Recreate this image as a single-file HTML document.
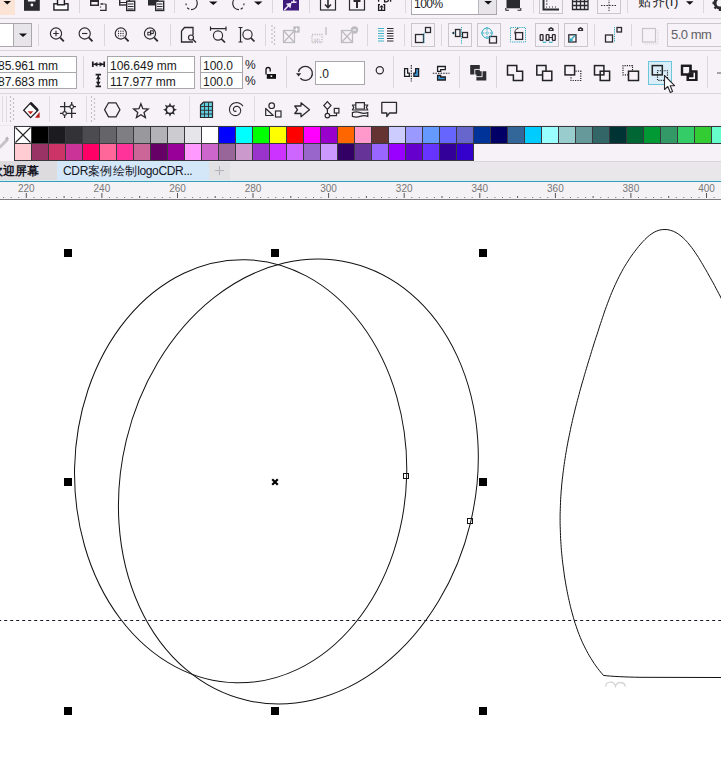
<!DOCTYPE html>
<html><head><meta charset="utf-8">
<style>
html,body{margin:0;padding:0;}
body{width:721px;height:759px;overflow:hidden;position:relative;background:#f6f2f8;font-family:"Liberation Sans",sans-serif;}
.a{position:absolute;}
.hl{position:absolute;height:1px;background:#d9d7db;}
.vs{position:absolute;width:1px;background:#d9d7db;}
.box{position:absolute;border:1px solid #a9a7ab;background:#fff;box-sizing:border-box;}
.btn{position:absolute;border:1px solid #c9c7cb;box-sizing:border-box;}
.t{position:absolute;font-size:12px;color:#1a1a1a;white-space:nowrap;line-height:14px;}
svg{position:absolute;overflow:visible;}
</style></head>
<body>
<!-- ===== ROW 1 ===== -->
<div class="a" style="left:0;top:0;width:15px;height:15px;background:#fbe3d6"></div>
<div class="a" style="left:411px;top:-2px;width:86px;height:17px;background:#fff;border:1px solid #a9a7ab;box-sizing:border-box"></div>
<div class="a" style="left:478px;top:-1px;width:17px;height:15px;background:#e7e5e9;border-left:1px solid #b9b7bb"></div>
<div class="a" style="left:539px;top:-2px;width:24px;height:16px;border:1px solid #c9c7cb;box-sizing:border-box"></div>
<div class="a" style="left:597px;top:-2px;width:24px;height:16px;border:1px solid #c9c7cb;box-sizing:border-box"></div>
<div class="t" style="left:414px;top:-3px;font-size:12px;line-height:14px;letter-spacing:-0.5px">100%</div>
<div class="t" style="left:638px;top:-6px;font-size:13px;line-height:16px;letter-spacing:0.5px">贴齐(I)</div>
<svg style="left:0;top:0" width="721" height="18">
 <g fill="#111">
  <path d="M3.5 1 L11 1 L7.25 4.5Z"/>
  <path d="M209 1.5 L217.5 1.5 L213.25 5Z"/>
  <path d="M254 1.5 L262.5 1.5 L258.25 5Z"/>
  <path d="M484.3 1 L492 1 L488.15 4.6Z"/>
  <path d="M686 1.2 L693.5 1.2 L689.75 4.8Z"/>
 </g>
 <g stroke="#d9d7db" stroke-width="1">
  <line x1="79.5" y1="0" x2="79.5" y2="13"/><line x1="174.5" y1="0" x2="174.5" y2="13"/>
  <line x1="272.5" y1="0" x2="272.5" y2="13"/><line x1="309.5" y1="0" x2="309.5" y2="13"/>
  <line x1="405.5" y1="0" x2="405.5" y2="13"/><line x1="533.5" y1="0" x2="533.5" y2="13"/>
  <line x1="627.5" y1="0" x2="627.5" y2="13"/><line x1="703.5" y1="0" x2="703.5" y2="13"/>
 </g>
 <!-- save -->
 <rect x="24" y="-2" width="15.8" height="12.8" fill="#2b2a2e"/>
 <rect x="27.9" y="-2" width="7.6" height="3.5" fill="#f6f2f8"/>
 <circle cx="31.9" cy="5" r="1.4" fill="#fff"/>
 <!-- print tray -->
 <rect x="53.9" y="3.8" width="14.1" height="6.2" fill="#fff" stroke="#1e1d21" stroke-width="1.4"/>
 <rect x="57.5" y="-2" width="6.9" height="6.8" fill="#f6f2f8" stroke="#1e1d21" stroke-width="1.4"/>
 <!-- import copy icons -->
 <path d="M90.7 -1 V5.3 H98.3 V-1" fill="none" stroke="#2b2a2e" stroke-width="1.4"/>
 <rect x="90" y="-1" width="9" height="3" fill="#2b2a2e"/>
 <path d="M100.5 4 H103 M100.5 6.5 V7.5 M106 4 V10.3 H100" fill="none" stroke="#2b2a2e" stroke-width="1.3"/>
 <path d="M103.5 4 H106" stroke="#2b2a2e" stroke-width="1.3" stroke-dasharray="1 1"/>
 <rect x="119.7" y="-1" width="9.6" height="6" fill="none" stroke="#2b2a2e" stroke-width="1.4"/>
 <path d="M120 2.5 H129" stroke="#2b2a2e" stroke-width="1"/>
 <rect x="126.7" y="1.2" width="8" height="9.3" fill="#f6f2f8" stroke="#2b2a2e" stroke-width="1.4"/>
 <path d="M128 4 H133.5 M128 6.5 H133.5 M128 9 H133.5" stroke="#2b2a2e" stroke-width="1.2"/>
 <rect x="148" y="-1" width="10.5" height="6.5" fill="#2b2a2e"/>
 <rect x="155.7" y="1.2" width="8" height="9.3" fill="#f6f2f8" stroke="#2b2a2e" stroke-width="1.4"/>
 <path d="M157 4 H162.5 M157 6.5 H162.5 M157 9 H162.5" stroke="#2b2a2e" stroke-width="1.2"/>
 <!-- undo redo -->
 <path d="M192.5 -2.8 A6.3 6.3 0 0 1 191 9.6" fill="none" stroke="#2b2a2e" stroke-width="1.2"/>
 <path d="M189.3 9.2 L187.2 7.8 M186.2 5.2 L186 3.5" fill="none" stroke="#2b2a2e" stroke-width="1.2"/>
 <path d="M237.5 -2.8 A6.3 6.3 0 0 0 239 9.6" fill="none" stroke="#2b2a2e" stroke-width="1.2"/>
 <path d="M240.7 9.2 L242.8 7.8 M243.8 5.2 L244 3.5" fill="none" stroke="#2b2a2e" stroke-width="1.2"/>
 <!-- purple -->
 <rect x="283" y="-2" width="16" height="12.5" fill="#3e1a7a"/>
 <path d="M284.3 10 L289.5 4.8" fill="none" stroke="#f0e8fa" stroke-width="1.6"/>
 <path d="M291.5 2.8 L285.8 3.8 L290.5 8.5Z" fill="#f0e8fa"/>
 <path d="M293.8 -1 V2.5 M291 2.3 H296.5" fill="none" stroke="#f0e8fa" stroke-width="1.5"/>
 <!-- import/export -->
 <rect x="320.5" y="-2" width="15" height="12" fill="none" stroke="#2b2a2e" stroke-width="1.2"/>
 <path d="M328 0 V7 M325 4.5 L328 7.5 L331 4.5" fill="none" stroke="#2b2a2e" stroke-width="1.6"/>
 <rect x="349.5" y="-2" width="15" height="12" fill="none" stroke="#2b2a2e" stroke-width="1.2"/>
 <path d="M357 8 V1 M353.5 1 H360.5" fill="none" stroke="#2b2a2e" stroke-width="2"/>
 <!-- pdf -->
 <path d="M378.6 -2 V1.8 M384.6 -2 V1.8 H386.5 Q388.6 1.8 388.6 -1 M390.6 -2 V1.8" fill="none" stroke="#1e1d21" stroke-width="1.3"/>
 <path d="M380 4.6 H378.6 V10.3 H384.6 V4.6 H383.2" fill="none" stroke="#1e1d21" stroke-width="1.3"/>
 <path d="M381.6 5 L383.8 7.6 H379.4Z" fill="#1e1d21"/>
 <rect x="381" y="7.4" width="1.3" height="2.6" fill="#1e1d21"/>
 <!-- dark square icon -->
 <rect x="506.5" y="-2" width="13.5" height="10.3" fill="#2b2a2e"/>
 <path d="M505.8 8 V10.3 H509 M517.5 10.3 H520.8 V8" fill="none" stroke="#2b2a2e" stroke-width="1.1"/>
 <!-- ruler icon -->
 <path d="M543.5 -1 V9.5 H559" fill="none" stroke="#2b2a2e" stroke-width="2"/>
 <path d="M546 7 H547 M549 7 H550 M552 7 H553 M555 7 H556 M546 4 H547.5 M546 1 H547.5" stroke="#2b2a2e" stroke-width="1"/>
 <!-- grid icon -->
 <g stroke="#2b2a2e" stroke-width="1.3" fill="none">
  <path d="M572.5 -1 V10 M576.5 -1 V10 M580.5 -1 V10 M584.5 -1 V10 M588 -1 V10 M572 1.5 H588.5 M572 5.5 H588.5 M572 9.5 H588.5"/>
 </g>
 <!-- guideline -->
 <path d="M609 -1 V11 M601 5.5 H617" stroke="#2b2a2e" stroke-width="1" stroke-dasharray="1.5 1.2"/>
 <!-- gear -->
 <circle cx="720" cy="3" r="5" fill="none" stroke="#2b2a2e" stroke-width="3"/>
 <path d="M712.5 3 H716 M720 -5 V-1 M714.5 -2.5 L717 0 M714.5 8.5 L717 6 M720 8 V11" stroke="#2b2a2e" stroke-width="2.4"/>
</svg>
<div class="hl" style="left:0;top:18px;width:721px"></div>

<!-- ===== ROW 2 ===== -->
<div class="box" style="left:-2px;top:23px;width:34px;height:24px"></div>
<div class="a" style="left:13px;top:24px;width:17px;height:22px;background:#e7e5e9;border-left:1px solid #a9a7ab"></div>
<div class="btn" style="left:411px;top:23px;width:24px;height:24px"></div>
<div class="btn" style="left:448px;top:23px;width:24px;height:24px"></div>
<div class="btn" style="left:477px;top:23px;width:24px;height:24px"></div>
<div class="btn" style="left:535px;top:23px;width:24px;height:24px"></div>
<div class="btn" style="left:564px;top:23px;width:24px;height:24px"></div>
<div class="box" style="left:667px;top:23px;width:60px;height:24px;background:#f6f2f8;border-color:#c9c7cb"></div>
<div class="t" style="left:671px;top:28px;font-size:13px;color:#616064;letter-spacing:-0.5px">5.0 mm</div>
<svg style="left:0;top:0" width="721" height="50">
 <path d="M19 33.5 H27 L23 37Z" fill="#111"/>
 <g stroke="#d9d7db" stroke-width="1">
  <line x1="38.5" y1="24" x2="38.5" y2="46"/><line x1="104.5" y1="24" x2="104.5" y2="46"/>
  <line x1="170.5" y1="24" x2="170.5" y2="46"/><line x1="265.5" y1="24" x2="265.5" y2="46"/>
  <line x1="367.5" y1="24" x2="367.5" y2="46"/><line x1="404.5" y1="24" x2="404.5" y2="46"/>
  <line x1="441.5" y1="24" x2="441.5" y2="46"/><line x1="594.5" y1="24" x2="594.5" y2="46"/>
  <line x1="631.5" y1="24" x2="631.5" y2="46"/>
 </g>
 <g fill="#a3a1a6"><circle cx="272" cy="26" r=".7"/><circle cx="274.5" cy="28" r=".7"/><circle cx="272" cy="30" r=".7"/><circle cx="274.5" cy="32" r=".7"/><circle cx="272" cy="34" r=".7"/><circle cx="274.5" cy="36" r=".7"/><circle cx="272" cy="38" r=".7"/><circle cx="274.5" cy="40" r=".7"/><circle cx="272" cy="42" r=".7"/><circle cx="274.5" cy="44" r=".7"/></g>
 <!-- zoom icons -->
 <g fill="none" stroke="#2b2a2e" stroke-width="1.15">
  <circle cx="56" cy="33.5" r="5.6"/><path d="M60.2 37.7 L63.8 41.3" stroke-width="1.9"/><path d="M53.3 33.5 H58.7 M56 30.8 V36.2"/>
  <circle cx="84.7" cy="33.5" r="5.6"/><path d="M88.9 37.7 L92.5 41.3" stroke-width="1.9"/><path d="M82 33.5 H87.4"/>
  <circle cx="120.8" cy="33.5" r="5.6"/><path d="M125 37.7 L128.6 41.3" stroke-width="1.9"/>
  <circle cx="150" cy="33.5" r="5.6"/><path d="M154.2 37.7 L157.8 41.3" stroke-width="1.9"/>
  <rect x="147.8" y="32.3" width="3" height="2.6" stroke-width="1"/><rect x="150.5" y="30.8" width="2.8" height="2.8" stroke-width="1"/>
  <path d="M181.5 31 L184.5 27.5 H193 V35 M193 42 H181.5 V31" stroke-width="1.3"/>
  <circle cx="191" cy="37.5" r="2.5" stroke-width="1.2"/><path d="M193 39.5 L196 42.5" stroke-width="1.5"/>
  <path d="M210.5 28.6 H226 M210.5 26.5 V30.7 M226 26.5 V30.7" stroke-width="1.2"/>
  <circle cx="218" cy="35.5" r="4.6"/><path d="M221.3 38.8 L225 42.5" stroke-width="1.7"/>
  <path d="M240.5 27.5 V42 M238.5 27.5 H242.5 M238.5 42 H242.5" stroke-width="1.2"/>
  <circle cx="247.5" cy="34.5" r="4.6"/><path d="M250.8 37.8 L254.5 41.5" stroke-width="1.7"/>
 </g>
 <g fill="#2b2a2e"><circle cx="118.5" cy="31.2" r=".65"/><circle cx="120.8" cy="31.2" r=".65"/><circle cx="123.1" cy="31.2" r=".65"/><circle cx="118.5" cy="33.5" r=".65"/><circle cx="120.8" cy="33.5" r=".65"/><circle cx="123.1" cy="33.5" r=".65"/><circle cx="118.5" cy="35.8" r=".65"/><circle cx="120.8" cy="35.8" r=".65"/><circle cx="123.1" cy="35.8" r=".65"/></g>
 <!-- gray disabled icons -->
 <g fill="none" stroke="#bdbbc0" stroke-width="1.3">
  <rect x="283.5" y="30.5" width="11" height="12"/><path d="M283.5 30.5 L294.5 42.5 M294.5 30.5 L283.5 42.5"/>
  <rect x="294" y="27" width="5" height="5" fill="#bdbbc0"/>
  <rect x="312" y="34.5" width="10" height="8" stroke-dasharray="1.2 1.2"/><path d="M326 27 V35" />
  <rect x="341.5" y="30.5" width="11" height="12"/><path d="M341.5 30.5 L352.5 42.5 M352.5 30.5 L341.5 42.5"/>
  <circle cx="354.5" cy="30" r="3" fill="#bdbbc0"/>
 </g>
 <path d="M294.8 29.5 H298.2 M296.5 27.8 V31.2 M352.8 30 H356.2" stroke="#fff" stroke-width="1"/>
 <text x="313.5" y="41.5" font-size="6" fill="#c6c4c8" font-family="Liberation Sans">ab</text>
 <!-- text align icon -->
 <g stroke-width="1.2">
  <path d="M378 28.5 H384 M378 31 H384 M378 33.5 H384 M378 36 H384 M378 38.5 H384 M378 41 H384" stroke="#3cb6c8"/>
  <path d="M387 28.5 H393.5 M387 31 H393.5 M387 33.5 H393.5 M387 36 H393.5 M387 38.5 H393.5 M387 41 H393.5" stroke="#2b2a2e"/>
 </g>
 <!-- align boxes -->
 <g fill="none" stroke="#2b2a2e" stroke-width="1.3">
  <rect x="415.5" y="34.5" width="8" height="8"/><rect x="425.5" y="27.5" width="5" height="5"/>
  <rect x="455.5" y="29.5" width="4.5" height="7"/><rect x="462.5" y="32.5" width="5" height="5"/>
  <rect x="489.5" y="36.5" width="7" height="6.5"/>
  <rect x="515.6" y="32.6" width="7" height="6.8"/>
  <rect x="540.2" y="34.6" width="2.8" height="5.8" rx="0.6"/><rect x="546.2" y="34.6" width="2.8" height="5.8" rx="0.6"/><rect x="552.4" y="34.6" width="2.8" height="5.8" rx="0.6"/>
  <path d="M549 37.5 H552.4" stroke-width="1"/>
  <rect x="568.8" y="34.8" width="7.2" height="7.2"/>
  <rect x="605.5" y="35" width="7" height="7"/><rect x="617" y="27.5" width="4.5" height="4.5"/>
 </g>
 <g fill="none" stroke="#2aaabf" stroke-width="1" stroke-dasharray="1.2 1">
  <path d="M424 33 V43"/><path d="M461.5 27 V44"/><path d="M452 33 H455" stroke-dasharray="none"/>
  <circle cx="487" cy="33" r="5" stroke-dasharray="none"/><path d="M487 27 V39 M481 33 H493"/>
  <rect x="510.5" y="27.5" width="15" height="14.5"/>
  <path d="M543 41.5 V42.3 H546 V41.5 M549.2 41.5 V42.3 H552.3 V41.5" stroke-dasharray="none"/>
  <path d="M614.5 27 V42.5"/>
 </g>
 <path d="M452 33 L454 31.5 V34.5Z" fill="#2b2a2e"/>
 <rect x="569.6" y="38.4" width="3" height="3" fill="#2aaabf"/>
 <path d="M572 38.5 L575 35.5" stroke="#2aaabf" stroke-width="1.2"/>
 <path d="M548.4 31 H553.6 V28.6 L551 27 L548.4 28.6Z M577.9 31 H583.1 V28.6 L580.5 27 L577.9 28.6Z" fill="#2b2a2e"/>
 <rect x="550.2" y="28.9" width="1.6" height="1.2" fill="#fff"/><rect x="579.7" y="28.9" width="1.6" height="1.2" fill="#fff"/>
 <path d="M515.6 35 A4.2 4.2 0 0 1 518.5 28.3" fill="none" stroke="#2b2a2e" stroke-width="0.9"/>
 <!-- gray outline icon -->
 <rect x="642.5" y="28.5" width="13" height="13.5" fill="none" stroke="#c6c4c8" stroke-width="1.2"/>
 <path d="M658 30 V44 H644" fill="none" stroke="#d0ced2" stroke-width="1" stroke-dasharray="1 1.2"/>
</svg>
<div class="hl" style="left:0;top:50px;width:721px"></div>

<!-- ===== PROPERTY BAR ===== -->
<div class="box" style="left:-2px;top:56px;width:79px;height:33px"></div>
<div class="hl" style="left:0;top:72px;width:76px;background:#a9a7ab"></div>
<div class="t" style="left:-2px;top:59px;font-size:12px;line-height:14px">85.961 mm</div>
<div class="t" style="left:-2px;top:75px;font-size:12px;line-height:14px">87.683 mm</div>

<div class="box" style="left:107px;top:56px;width:88px;height:33px"></div>
<div class="hl" style="left:108px;top:72px;width:86px;background:#a9a7ab"></div>
<div class="t" style="left:110px;top:59px;font-size:12px;line-height:14px">106.649 mm</div>
<div class="t" style="left:110px;top:75px;font-size:12px;line-height:14px">117.977 mm</div>

<div class="box" style="left:200px;top:56px;width:43px;height:33px"></div>
<div class="hl" style="left:201px;top:72px;width:41px;background:#a9a7ab"></div>
<div class="t" style="left:203px;top:59px;font-size:12px;line-height:14px">100.0</div>
<div class="t" style="left:203px;top:75px;font-size:12px;line-height:14px">100.0</div>
<div class="t" style="left:245px;top:58px;font-size:12px;line-height:14px">%</div>
<div class="t" style="left:245px;top:74px;font-size:12px;line-height:14px">%</div>

<div class="box" style="left:315px;top:61px;width:50px;height:24px"></div>
<div class="t" style="left:319px;top:67px;font-size:12px;line-height:14px">.0</div>
<div class="a" style="left:648px;top:61px;width:24px;height:24px;box-sizing:border-box;border:1px solid #6cc6da;background:#d9eef8"></div>

<svg style="left:0;top:0" width="721" height="125">
 <g stroke="#d9d7db" stroke-width="1">
  <line x1="83.5" y1="56" x2="83.5" y2="88"/><line x1="286.5" y1="56" x2="286.5" y2="88"/>
  <line x1="393.5" y1="56" x2="393.5" y2="88"/><line x1="459.5" y1="56" x2="459.5" y2="88"/>
  <line x1="496.5" y1="56" x2="496.5" y2="88"/><line x1="707.5" y1="56" x2="707.5" y2="88"/>
 </g>
 <!-- width/height icons -->
 <g stroke="#1e1d21" fill="#1e1d21">
  <path d="M92.8 61.6 V67 M104.2 61.6 V67" stroke-width="1.7"/>
  <path d="M93 64.3 H104" stroke-width="1.3"/>
  <path d="M93.6 64.3 L97.4 61.9 V66.7Z M103.4 64.3 L99.6 61.9 V66.7Z" stroke="none"/>
  <path d="M95.6 74.6 H101 M95.6 86.4 H101" stroke-width="1.7"/>
  <path d="M98.3 75 V86" stroke-width="1.3"/>
  <path d="M98.3 75.4 L95.9 79.2 H100.7Z M98.3 85.6 L95.9 81.8 H100.7Z" stroke="none"/>
 </g>
 <!-- lock -->
 <path d="M266 74.5 V69.6 A2.1 2.1 0 0 1 270.2 69.6 V71.4" fill="none" stroke="#111" stroke-width="1.3"/>
 <rect x="266.8" y="74" width="9.2" height="4.8" fill="#111"/>
 <rect x="270.6" y="75.4" width="1.6" height="1.6" fill="#fff"/>
 <!-- rotate -->
 <path d="M300.3 78.2 A7 7 0 1 0 298.5 72" fill="none" stroke="#2b2a2e" stroke-width="1.3"/>
 <path d="M296 73.2 H301.2 L298.6 76.6Z" fill="#2b2a2e"/>
 <circle cx="379.8" cy="70.2" r="3.6" fill="none" stroke="#2b2a2e" stroke-width="1.2"/>
 <!-- mirror -->
 <path d="M404.6 68.6 H407.6 V73.2 H409.3 V76.3 H404.6Z" fill="#fff" stroke="#1e1d21" stroke-width="1.3" stroke-linejoin="miter"/>
 <path d="M418.6 68.6 H415.6 V73.2 H413.9 V76.3 H418.6Z" fill="#3c9ad6" stroke="#1e1d21" stroke-width="1.3"/>
 <path d="M411.3 65 V81.5" stroke="#1e1d21" stroke-width="1.1" stroke-dasharray="1.5 1.1"/>
 <path d="M437.6 66.5 H445.3 V69.6 H440.7 V71.3 H437.6Z" fill="#fff" stroke="#1e1d21" stroke-width="1.3"/>
 <path d="M437.6 80 H445.3 V77 H440.7 V75.5 H437.6Z" fill="#3c9ad6" stroke="#1e1d21" stroke-width="1.3"/>
 <path d="M432.8 73.3 H449.5" stroke="#1e1d21" stroke-width="1.1" stroke-dasharray="1.5 1.1"/>
 <!-- combine -->
 <path d="M470.2 65 H479.8 V71.2 H486.3 V80.6 H476.4 V74.6 H470.2Z" fill="#2d2c30"/>
 <rect x="474.8" y="69.4" width="7.3" height="7.3" fill="none" stroke="#f6f2f8" stroke-width="0.9"/>
 <!-- weld -->
 <path d="M507.5 65.6 H516.8 V71.2 H522.6 V80.5 H513.4 V74.9 H507.5Z" fill="none" stroke="#222" stroke-width="1.5"/>
 <!-- trim -->
 <path d="M542.6 74.9 H536.8 V65.6 H546 V71.2" fill="none" stroke="#222" stroke-width="1.5"/>
 <rect x="542.6" y="71.2" width="9.2" height="9.3" fill="none" stroke="#222" stroke-width="1.5"/>
 <!-- intersect -->
 <rect x="565" y="65.6" width="9.6" height="9.3" fill="none" stroke="#222" stroke-width="1.5"/>
 <path d="M575.5 71.2 H580.8 V80.5 H571 V75.5" fill="none" stroke="#222" stroke-width="1.2" stroke-dasharray="1.2 1.2"/>
 <!-- simplify -->
 <rect x="594.5" y="65.6" width="9.4" height="9.3" fill="none" stroke="#222" stroke-width="1.5"/>
 <rect x="600.2" y="71.2" width="9.4" height="9.3" fill="none" stroke="#222" stroke-width="1.5"/>
 <!-- front minus back -->
 <path d="M628.3 74.9 H623 V65.6 H632.5 V71.2" fill="none" stroke="#222" stroke-width="1.1" stroke-dasharray="1.2 1.1"/>
 <rect x="628.5" y="71.2" width="10" height="9.3" fill="none" stroke="#222" stroke-width="1.5"/>
 <!-- back minus front -->
 <rect x="652.3" y="65.6" width="10" height="9.3" fill="none" stroke="#222" stroke-width="1.5"/>
 <rect x="657.5" y="70.8" width="10" height="9.6" fill="none" stroke="#222" stroke-width="1.1" stroke-dasharray="1.2 1.1"/>
 <!-- boundary -->
 <path d="M682 65.8 H690.5 V71.5 H696.3 V80 H687.8 V74.5 H682Z" fill="none" stroke="#1c1b1f" stroke-width="2.2"/>
 <path d="M682 65.8 H690.5 V71.5 H696.3 V80 H687.8 V74.5 H682Z" fill="none" stroke="#1c1b1f" stroke-width="2.2"/>
 <rect x="688.5" y="72.3" width="5" height="5" fill="#1c1b1f"/>
 <path d="M717 73 H721" stroke="#555" stroke-width="1"/>
 <!-- cursor -->
 <path d="M664.5 75.5 L664.5 89.5 L667.8 86.5 L670.3 92.5 L672.6 91.5 L670.2 85.8 L674.6 85.6Z" fill="#fff" stroke="#2b2a2e" stroke-width="1.1" stroke-linejoin="round"/>

 <!-- ===== ROW 4 ICONS ===== -->
 <g stroke="#dedce0"><line x1="2.5" y1="96" x2="2.5" y2="122"/><line x1="6.5" y1="96" x2="6.5" y2="122"/>
  <line x1="49.5" y1="96" x2="49.5" y2="122"/><line x1="86.5" y1="96" x2="86.5" y2="122"/>
  <line x1="189.5" y1="96" x2="189.5" y2="122"/><line x1="254.5" y1="96" x2="254.5" y2="122"/></g>
 <g fill="#a3a1a6">
  <circle cx="10.5" cy="97" r=".7"/><circle cx="13.5" cy="99" r=".7"/><circle cx="10.5" cy="101" r=".7"/><circle cx="13.5" cy="103" r=".7"/><circle cx="10.5" cy="105" r=".7"/><circle cx="13.5" cy="107" r=".7"/><circle cx="10.5" cy="109" r=".7"/><circle cx="13.5" cy="111" r=".7"/><circle cx="10.5" cy="113" r=".7"/><circle cx="13.5" cy="115" r=".7"/><circle cx="10.5" cy="117" r=".7"/><circle cx="13.5" cy="119" r=".7"/><circle cx="10.5" cy="121" r=".7"/>
  <circle cx="91.5" cy="97" r=".7"/><circle cx="94.5" cy="99" r=".7"/><circle cx="91.5" cy="101" r=".7"/><circle cx="94.5" cy="103" r=".7"/><circle cx="91.5" cy="105" r=".7"/><circle cx="94.5" cy="107" r=".7"/><circle cx="91.5" cy="109" r=".7"/><circle cx="94.5" cy="111" r=".7"/><circle cx="91.5" cy="113" r=".7"/><circle cx="94.5" cy="115" r=".7"/><circle cx="91.5" cy="117" r=".7"/><circle cx="94.5" cy="119" r=".7"/><circle cx="91.5" cy="121" r=".7"/>
 </g>
 <!-- fill -->
 <path d="M30.6 102.8 L38 110.3 L30.6 117.6 L23.7 110.3Z" fill="#fff" stroke="#1e1d21" stroke-width="1.25"/>
 <path d="M30.6 103 L37.6 110.1" stroke="#1e1d21" stroke-width="2.6"/>
 <path d="M27.6 111.2 H33.3 L30.5 114.2Z" fill="#c8201c"/>
 <path d="M39.6 112 V117.8 H35Z" fill="#b8221a"/>
 <!-- dimension -->
 <g stroke="#2b2a2e" stroke-width="1.3" fill="none">
  <path d="M64.6 102 V118 M71.7 102 V118 M60 106.7 H76 M60 113.4 H76"/>
 </g>
 <circle cx="64.6" cy="113.4" r="1.8" fill="#fff" stroke="#2b2a2e" stroke-width="1.2"/>
 <circle cx="71.7" cy="106.7" r="1.8" fill="#fff" stroke="#2b2a2e" stroke-width="1.2"/>
 <!-- shapes -->
 <path d="M104.6 109.8 L108.5 102.8 H116 L119.9 109.8 L116 116.9 H108.5Z" fill="none" stroke="#2b2a2e" stroke-width="1.3"/>
 <path d="M140.90 103.80 L142.84 108.73 L148.13 109.05 L144.04 112.42 L145.37 117.55 L140.90 114.70 L136.43 117.55 L137.76 112.42 L133.67 109.05 L138.96 108.73Z" fill="none" stroke="#2b2a2e" stroke-width="1.3" stroke-linejoin="miter"/>
 <path d="M170.00 102.80 L168.68 105.81 L171.32 105.81Z M174.95 104.85 L171.88 106.05 L173.75 107.92Z M177.00 109.80 L173.99 108.48 L173.99 111.12Z M174.95 114.75 L173.75 111.68 L171.88 113.55Z M170.00 116.80 L171.32 113.79 L168.68 113.79Z M165.05 114.75 L168.12 113.55 L166.25 111.68Z M163.00 109.80 L166.01 111.12 L166.01 108.48Z M165.05 104.85 L166.25 107.92 L168.12 106.05Z" fill="#2b2a2e"/>
 <circle cx="170.0" cy="109.8" r="3.75" fill="#f6f2f8" stroke="#2b2a2e" stroke-width="1.6"/>
 <!-- graph paper -->
 <path d="M200.5 105 L203.5 102.2 H212.5 V117.5 H200.5Z" fill="#62cfe0" stroke="#2b2a2e" stroke-width="1.2"/>
 <path d="M200.5 106.5 H212.5 M200.5 110.3 H212.5 M200.5 114 H212.5 M204.5 102.5 V117.5 M208.5 102.5 V117.5" stroke="#2b2a2e" stroke-width="0.9"/>
 <!-- spiral -->
 <path d="M236.24 110.72 L236.20 110.81 L236.16 110.90 L236.11 110.98 L236.04 111.05 L235.97 111.12 L235.89 111.19 L235.80 111.24 L235.70 111.29 L235.59 111.33 L235.48 111.35 L235.36 111.37 L235.24 111.38 L235.12 111.38 L234.99 111.36 L234.86 111.33 L234.73 111.30 L234.61 111.25 L234.48 111.18 L234.36 111.11 L234.24 111.02 L234.12 110.93 L234.01 110.82 L233.91 110.70 L233.81 110.57 L233.73 110.43 L233.65 110.28 L233.58 110.12 L233.53 109.95 L233.48 109.78 L233.45 109.60 L233.44 109.42 L233.43 109.23 L233.44 109.04 L233.47 108.85 L233.51 108.66 L233.56 108.46 L233.63 108.27 L233.72 108.08 L233.82 107.90 L233.93 107.72 L234.06 107.55 L234.21 107.38 L234.36 107.22 L234.53 107.07 L234.72 106.94 L234.91 106.81 L235.12 106.70 L235.34 106.60 L235.56 106.52 L235.80 106.45 L236.04 106.40 L236.29 106.36 L236.54 106.35 L236.80 106.35 L237.06 106.37 L237.32 106.40 L237.58 106.46 L237.84 106.54 L238.09 106.63 L238.34 106.74 L238.59 106.88 L238.82 107.03 L239.05 107.20 L239.27 107.38 L239.47 107.58 L239.67 107.80 L239.85 108.04 L240.01 108.29 L240.16 108.55 L240.29 108.82 L240.40 109.11 L240.50 109.41 L240.57 109.71 L240.62 110.02 L240.65 110.34 L240.66 110.66 L240.64 110.98 L240.61 111.31 L240.55 111.63 L240.46 111.95 L240.36 112.27 L240.23 112.58 L240.08 112.89 L239.91 113.19 L239.71 113.47 L239.49 113.75 L239.26 114.01 L239.00 114.25 L238.73 114.48 L238.43 114.69 L238.13 114.88 L237.80 115.06 L237.47 115.20 L237.12 115.33 L236.76 115.44 L236.39 115.51 L236.02 115.57 L235.63 115.60 L235.25 115.60 L234.86 115.57 L234.48 115.52 L234.09 115.44 L233.71 115.34 L233.34 115.20 L232.97 115.04 L232.61 114.86 L232.26 114.65 L231.93 114.41 L231.61 114.15 L231.31 113.87 L231.03 113.56 L230.76 113.24 L230.52 112.89 L230.30 112.53 L230.11 112.15 L229.94 111.76 L229.79 111.35 L229.68 110.93 L229.59 110.50 L229.53 110.06 L229.51 109.62 L229.51 109.18 L229.54 108.73 L229.61 108.29 L229.70 107.84 L229.83 107.41 L229.99 106.98 L230.17 106.56 L230.39 106.15 L230.64 105.75 L230.91 105.37 L231.21 105.01 L231.54 104.67 L231.89 104.35 L232.26 104.05 L232.66 103.78 L233.07 103.53 L233.51 103.31 L233.96 103.12 L234.42 102.96 L234.90 102.83 L235.38 102.74 L235.88 102.68 L236.38 102.65 L236.88 102.66 L237.38 102.70 L237.88 102.77 L238.38 102.88 L238.87 103.03 L239.36 103.21 L239.83 103.42 L240.29 103.66 L240.73 103.94 L241.15 104.25 L241.56 104.59 L241.94 104.96 L242.30 105.35 L242.63 105.77 L242.93 106.21" fill="none" stroke="#2b2a2e" stroke-width="1.1"/>
 <!-- basic shapes -->
 <circle cx="271.7" cy="105.7" r="2.8" fill="none" stroke="#2b2a2e" stroke-width="1.2"/>
 <path d="M265.7 108.5 V115.5 H273.3Z" fill="none" stroke="#2b2a2e" stroke-width="1.2" stroke-linejoin="round"/>
 <rect x="275.5" y="111" width="5.5" height="6" fill="none" stroke="#2b2a2e" stroke-width="1.2"/>
 <!-- arrow -->
 <path d="M294.8 106 H301 V102.8 L309.5 109.8 L301 116.8 V113.5 H294.8 L297.5 109.8Z" fill="none" stroke="#2b2a2e" stroke-width="1.3" stroke-linejoin="round"/>
 <!-- flowchart -->
 <path d="M327.4 101.7 L331 105.5 L327.4 109.3 L323.8 105.5Z" fill="none" stroke="#2b2a2e" stroke-width="1.2"/>
 <path d="M327.4 109.3 V113.2 M329.8 115.6 H336.5 V113" fill="none" stroke="#2b2a2e" stroke-width="1.2"/>
 <circle cx="327.4" cy="115.6" r="2.3" fill="none" stroke="#2b2a2e" stroke-width="1.2"/>
 <rect x="334.3" y="108.4" width="4.6" height="4.6" fill="none" stroke="#2b2a2e" stroke-width="1.2"/>
 <!-- banner -->
 <path d="M355.8 102.6 H364.4 V109 H355.8Z" fill="none" stroke="#2b2a2e" stroke-width="1.2"/>
 <path d="M355.8 105 H352.4 L353.8 107.4 L352.4 110 H367.8 L366.4 107.4 L367.8 105 H364.4" fill="none" stroke="#2b2a2e" stroke-width="1.2" stroke-linejoin="round"/>
 <path d="M352.4 112.6 Q356.2 111.2 360.1 112.6 T367.8 112.6 V116.4 Q364 115 360.1 116.4 T352.4 116.4Z" fill="none" stroke="#2b2a2e" stroke-width="1.2"/>
 <!-- callout -->
 <path d="M381.8 102.4 H396.5 V113 H389.5 L386.8 116.6 V113 H381.8Z" fill="none" stroke="#2b2a2e" stroke-width="1.3" stroke-linejoin="round"/>
</svg>
<div class="hl" style="left:0;top:93px;width:721px"></div>

<!-- ===== ROW 4 ===== -->
<div class="hl" style="left:0;top:125px;width:721px;background:#ebe9ed"></div>

<!-- ===== PALETTE ===== -->
<div class="a" style="left:14px;top:126px;width:707px;height:18px;background:#3a393d"></div>
<div class="a" style="left:14px;top:143px;width:460px;height:18px;background:#3a393d"></div>
<div class="a" style="left:15px;top:127px;width:16px;height:16px;background:#fff"></div>
<svg style="left:15px;top:127px" width="16" height="16"><path d="M0.5 0.5L15.5 15.5M15.5 0.5L0.5 15.5" stroke="#222" stroke-width="1.1"/></svg>
<div class="a" style="left:32px;top:127px;width:16px;height:16px;background:#000000"></div>
<div class="a" style="left:49px;top:127px;width:16px;height:16px;background:#1c1b1f"></div>
<div class="a" style="left:66px;top:127px;width:16px;height:16px;background:#333236"></div>
<div class="a" style="left:83px;top:127px;width:16px;height:16px;background:#4c4b50"></div>
<div class="a" style="left:100px;top:127px;width:16px;height:16px;background:#656468"></div>
<div class="a" style="left:117px;top:127px;width:16px;height:16px;background:#7f7e82"></div>
<div class="a" style="left:134px;top:127px;width:16px;height:16px;background:#99989c"></div>
<div class="a" style="left:151px;top:127px;width:16px;height:16px;background:#b3b2b6"></div>
<div class="a" style="left:168px;top:127px;width:16px;height:16px;background:#cccbcf"></div>
<div class="a" style="left:185px;top:127px;width:16px;height:16px;background:#e6e5e9"></div>
<div class="a" style="left:202px;top:127px;width:16px;height:16px;background:#ffffff"></div>
<div class="a" style="left:219px;top:127px;width:16px;height:16px;background:#0000ff"></div>
<div class="a" style="left:236px;top:127px;width:16px;height:16px;background:#00ffff"></div>
<div class="a" style="left:253px;top:127px;width:16px;height:16px;background:#00ff00"></div>
<div class="a" style="left:270px;top:127px;width:16px;height:16px;background:#ffff00"></div>
<div class="a" style="left:287px;top:127px;width:16px;height:16px;background:#ff0000"></div>
<div class="a" style="left:304px;top:127px;width:16px;height:16px;background:#ff00ff"></div>
<div class="a" style="left:321px;top:127px;width:16px;height:16px;background:#9900cc"></div>
<div class="a" style="left:338px;top:127px;width:16px;height:16px;background:#ff6600"></div>
<div class="a" style="left:355px;top:127px;width:16px;height:16px;background:#ff99cc"></div>
<div class="a" style="left:372px;top:127px;width:16px;height:16px;background:#663333"></div>
<div class="a" style="left:389px;top:127px;width:16px;height:16px;background:#ccccff"></div>
<div class="a" style="left:406px;top:127px;width:16px;height:16px;background:#9999ff"></div>
<div class="a" style="left:423px;top:127px;width:16px;height:16px;background:#6699ff"></div>
<div class="a" style="left:440px;top:127px;width:16px;height:16px;background:#6666ff"></div>
<div class="a" style="left:457px;top:127px;width:16px;height:16px;background:#6666cc"></div>
<div class="a" style="left:474px;top:127px;width:16px;height:16px;background:#003399"></div>
<div class="a" style="left:491px;top:127px;width:16px;height:16px;background:#000066"></div>
<div class="a" style="left:508px;top:127px;width:16px;height:16px;background:#336699"></div>
<div class="a" style="left:525px;top:127px;width:16px;height:16px;background:#00ccff"></div>
<div class="a" style="left:542px;top:127px;width:16px;height:16px;background:#99ffff"></div>
<div class="a" style="left:559px;top:127px;width:16px;height:16px;background:#99cccc"></div>
<div class="a" style="left:576px;top:127px;width:16px;height:16px;background:#669999"></div>
<div class="a" style="left:593px;top:127px;width:16px;height:16px;background:#336666"></div>
<div class="a" style="left:610px;top:127px;width:16px;height:16px;background:#003333"></div>
<div class="a" style="left:627px;top:127px;width:16px;height:16px;background:#006633"></div>
<div class="a" style="left:644px;top:127px;width:16px;height:16px;background:#009933"></div>
<div class="a" style="left:661px;top:127px;width:16px;height:16px;background:#339966"></div>
<div class="a" style="left:678px;top:127px;width:16px;height:16px;background:#33cc66"></div>
<div class="a" style="left:695px;top:127px;width:16px;height:16px;background:#33cc33"></div>
<div class="a" style="left:712px;top:127px;width:16px;height:16px;background:#66ffcc"></div>
<div class="a" style="left:15px;top:144px;width:16px;height:16px;background:#ffccd4"></div>
<div class="a" style="left:32px;top:144px;width:16px;height:16px;background:#993366"></div>
<div class="a" style="left:49px;top:144px;width:16px;height:16px;background:#cc3366"></div>
<div class="a" style="left:66px;top:144px;width:16px;height:16px;background:#cc3399"></div>
<div class="a" style="left:83px;top:144px;width:16px;height:16px;background:#ff0066"></div>
<div class="a" style="left:100px;top:144px;width:16px;height:16px;background:#ff6699"></div>
<div class="a" style="left:117px;top:144px;width:16px;height:16px;background:#ff3399"></div>
<div class="a" style="left:134px;top:144px;width:16px;height:16px;background:#cc6699"></div>
<div class="a" style="left:151px;top:144px;width:16px;height:16px;background:#660066"></div>
<div class="a" style="left:168px;top:144px;width:16px;height:16px;background:#990099"></div>
<div class="a" style="left:185px;top:144px;width:16px;height:16px;background:#ff99ff"></div>
<div class="a" style="left:202px;top:144px;width:16px;height:16px;background:#cc66cc"></div>
<div class="a" style="left:219px;top:144px;width:16px;height:16px;background:#996699"></div>
<div class="a" style="left:236px;top:144px;width:16px;height:16px;background:#cc99cc"></div>
<div class="a" style="left:253px;top:144px;width:16px;height:16px;background:#9933cc"></div>
<div class="a" style="left:270px;top:144px;width:16px;height:16px;background:#cc33ff"></div>
<div class="a" style="left:287px;top:144px;width:16px;height:16px;background:#cc66ff"></div>
<div class="a" style="left:304px;top:144px;width:16px;height:16px;background:#9966cc"></div>
<div class="a" style="left:321px;top:144px;width:16px;height:16px;background:#cc99ff"></div>
<div class="a" style="left:338px;top:144px;width:16px;height:16px;background:#330066"></div>
<div class="a" style="left:355px;top:144px;width:16px;height:16px;background:#663399"></div>
<div class="a" style="left:372px;top:144px;width:16px;height:16px;background:#9966ff"></div>
<div class="a" style="left:389px;top:144px;width:16px;height:16px;background:#9900ff"></div>
<div class="a" style="left:406px;top:144px;width:16px;height:16px;background:#6600cc"></div>
<div class="a" style="left:423px;top:144px;width:16px;height:16px;background:#6633ff"></div>
<div class="a" style="left:440px;top:144px;width:16px;height:16px;background:#330099"></div>
<div class="a" style="left:457px;top:144px;width:16px;height:16px;background:#3300cc"></div>

<svg style="left:0;top:126px" width="14" height="35"><path d="M-2 23 L7 14" stroke="#c5c3c7" stroke-width="3" stroke-linecap="round"/><path d="M6 13.5 L8 11.5" stroke="#b5b3b7" stroke-width="2.5"/></svg>
<!-- ===== TABS ===== -->
<div class="a" style="left:0;top:161px;width:721px;height:20px;background:#e9e7ea"></div>
<div class="a" style="left:474px;top:161px;width:247px;height:1px;background:#d9d7db"></div>
<div class="a" style="left:0;top:161px;width:57px;height:20px;background:#dddbde"></div>
<div class="a" style="left:57px;top:161px;width:152px;height:20px;background:#d3e7f9"></div>
<div class="a" style="left:209px;top:162px;width:21px;height:18px;background:#e1e0e3"></div>
<svg style="left:209px;top:162px" width="21" height="18"><path d="M6 8.5 H15 M10.5 4 V13" stroke="#b5b4b8" stroke-width="1.2"/></svg>
<div class="t" style="left:-9px;top:164px;color:#15151f;font-weight:600">欢迎屏幕</div>
<div class="t" style="left:63px;top:164px;letter-spacing:-0.35px;color:#15151f">CDR<span style="letter-spacing:0.3px">案例绘制</span>logoCDR...</div>
<div class="a" style="left:0;top:180px;width:721px;height:1px;background:#cfeef6"></div>
<div class="a" style="left:0;top:181px;width:721px;height:1px;background:#3e9db4"></div>

<!-- ===== RULER ===== -->
<div class="a" style="left:0;top:182px;width:721px;height:17px;background:#f4f2f5"></div>
<svg style="left:0;top:182px;font-size:10px;fill:#777" width="721" height="18"><line x1="3.6" y1="15" x2="3.6" y2="16" stroke="#777"/>
<line x1="11.2" y1="15" x2="11.2" y2="16" stroke="#777"/>
<line x1="18.7" y1="15" x2="18.7" y2="16" stroke="#777"/>
<line x1="26.3" y1="11" x2="26.3" y2="16" stroke="#555"/>
<text x="26.3" y="10" text-anchor="middle">220</text>
<line x1="33.9" y1="15" x2="33.9" y2="16" stroke="#777"/>
<line x1="41.4" y1="15" x2="41.4" y2="16" stroke="#777"/>
<line x1="49.0" y1="15" x2="49.0" y2="16" stroke="#777"/>
<line x1="56.5" y1="15" x2="56.5" y2="16" stroke="#777"/>
<line x1="64.1" y1="14" x2="64.1" y2="16" stroke="#555"/>
<line x1="71.6" y1="15" x2="71.6" y2="16" stroke="#777"/>
<line x1="79.2" y1="15" x2="79.2" y2="16" stroke="#777"/>
<line x1="86.8" y1="15" x2="86.8" y2="16" stroke="#777"/>
<line x1="94.3" y1="15" x2="94.3" y2="16" stroke="#777"/>
<line x1="101.9" y1="11" x2="101.9" y2="16" stroke="#555"/>
<text x="101.9" y="10" text-anchor="middle">240</text>
<line x1="109.4" y1="15" x2="109.4" y2="16" stroke="#777"/>
<line x1="117.0" y1="15" x2="117.0" y2="16" stroke="#777"/>
<line x1="124.6" y1="15" x2="124.6" y2="16" stroke="#777"/>
<line x1="132.1" y1="15" x2="132.1" y2="16" stroke="#777"/>
<line x1="139.7" y1="14" x2="139.7" y2="16" stroke="#555"/>
<line x1="147.2" y1="15" x2="147.2" y2="16" stroke="#777"/>
<line x1="154.8" y1="15" x2="154.8" y2="16" stroke="#777"/>
<line x1="162.3" y1="15" x2="162.3" y2="16" stroke="#777"/>
<line x1="169.9" y1="15" x2="169.9" y2="16" stroke="#777"/>
<line x1="177.5" y1="11" x2="177.5" y2="16" stroke="#555"/>
<text x="177.5" y="10" text-anchor="middle">260</text>
<line x1="185.0" y1="15" x2="185.0" y2="16" stroke="#777"/>
<line x1="192.6" y1="15" x2="192.6" y2="16" stroke="#777"/>
<line x1="200.1" y1="15" x2="200.1" y2="16" stroke="#777"/>
<line x1="207.7" y1="15" x2="207.7" y2="16" stroke="#777"/>
<line x1="215.2" y1="14" x2="215.2" y2="16" stroke="#555"/>
<line x1="222.8" y1="15" x2="222.8" y2="16" stroke="#777"/>
<line x1="230.4" y1="15" x2="230.4" y2="16" stroke="#777"/>
<line x1="237.9" y1="15" x2="237.9" y2="16" stroke="#777"/>
<line x1="245.5" y1="15" x2="245.5" y2="16" stroke="#777"/>
<line x1="253.0" y1="11" x2="253.0" y2="16" stroke="#555"/>
<text x="253.0" y="10" text-anchor="middle">280</text>
<line x1="260.6" y1="15" x2="260.6" y2="16" stroke="#777"/>
<line x1="268.2" y1="15" x2="268.2" y2="16" stroke="#777"/>
<line x1="275.7" y1="15" x2="275.7" y2="16" stroke="#777"/>
<line x1="283.3" y1="15" x2="283.3" y2="16" stroke="#777"/>
<line x1="290.8" y1="14" x2="290.8" y2="16" stroke="#555"/>
<line x1="298.4" y1="15" x2="298.4" y2="16" stroke="#777"/>
<line x1="305.9" y1="15" x2="305.9" y2="16" stroke="#777"/>
<line x1="313.5" y1="15" x2="313.5" y2="16" stroke="#777"/>
<line x1="321.1" y1="15" x2="321.1" y2="16" stroke="#777"/>
<line x1="328.6" y1="11" x2="328.6" y2="16" stroke="#555"/>
<text x="328.6" y="10" text-anchor="middle">300</text>
<line x1="336.2" y1="15" x2="336.2" y2="16" stroke="#777"/>
<line x1="343.7" y1="15" x2="343.7" y2="16" stroke="#777"/>
<line x1="351.3" y1="15" x2="351.3" y2="16" stroke="#777"/>
<line x1="358.9" y1="15" x2="358.9" y2="16" stroke="#777"/>
<line x1="366.4" y1="14" x2="366.4" y2="16" stroke="#555"/>
<line x1="374.0" y1="15" x2="374.0" y2="16" stroke="#777"/>
<line x1="381.5" y1="15" x2="381.5" y2="16" stroke="#777"/>
<line x1="389.1" y1="15" x2="389.1" y2="16" stroke="#777"/>
<line x1="396.6" y1="15" x2="396.6" y2="16" stroke="#777"/>
<line x1="404.2" y1="11" x2="404.2" y2="16" stroke="#555"/>
<text x="404.2" y="10" text-anchor="middle">320</text>
<line x1="411.8" y1="15" x2="411.8" y2="16" stroke="#777"/>
<line x1="419.3" y1="15" x2="419.3" y2="16" stroke="#777"/>
<line x1="426.9" y1="15" x2="426.9" y2="16" stroke="#777"/>
<line x1="434.4" y1="15" x2="434.4" y2="16" stroke="#777"/>
<line x1="442.0" y1="14" x2="442.0" y2="16" stroke="#555"/>
<line x1="449.5" y1="15" x2="449.5" y2="16" stroke="#777"/>
<line x1="457.1" y1="15" x2="457.1" y2="16" stroke="#777"/>
<line x1="464.7" y1="15" x2="464.7" y2="16" stroke="#777"/>
<line x1="472.2" y1="15" x2="472.2" y2="16" stroke="#777"/>
<line x1="479.8" y1="11" x2="479.8" y2="16" stroke="#555"/>
<text x="479.8" y="10" text-anchor="middle">340</text>
<line x1="487.3" y1="15" x2="487.3" y2="16" stroke="#777"/>
<line x1="494.9" y1="15" x2="494.9" y2="16" stroke="#777"/>
<line x1="502.5" y1="15" x2="502.5" y2="16" stroke="#777"/>
<line x1="510.0" y1="15" x2="510.0" y2="16" stroke="#777"/>
<line x1="517.6" y1="14" x2="517.6" y2="16" stroke="#555"/>
<line x1="525.1" y1="15" x2="525.1" y2="16" stroke="#777"/>
<line x1="532.7" y1="15" x2="532.7" y2="16" stroke="#777"/>
<line x1="540.2" y1="15" x2="540.2" y2="16" stroke="#777"/>
<line x1="547.8" y1="15" x2="547.8" y2="16" stroke="#777"/>
<line x1="555.4" y1="11" x2="555.4" y2="16" stroke="#555"/>
<text x="555.4" y="10" text-anchor="middle">360</text>
<line x1="562.9" y1="15" x2="562.9" y2="16" stroke="#777"/>
<line x1="570.5" y1="15" x2="570.5" y2="16" stroke="#777"/>
<line x1="578.0" y1="15" x2="578.0" y2="16" stroke="#777"/>
<line x1="585.6" y1="15" x2="585.6" y2="16" stroke="#777"/>
<line x1="593.1" y1="14" x2="593.1" y2="16" stroke="#555"/>
<line x1="600.7" y1="15" x2="600.7" y2="16" stroke="#777"/>
<line x1="608.3" y1="15" x2="608.3" y2="16" stroke="#777"/>
<line x1="615.8" y1="15" x2="615.8" y2="16" stroke="#777"/>
<line x1="623.4" y1="15" x2="623.4" y2="16" stroke="#777"/>
<line x1="630.9" y1="11" x2="630.9" y2="16" stroke="#555"/>
<text x="630.9" y="10" text-anchor="middle">380</text>
<line x1="638.5" y1="15" x2="638.5" y2="16" stroke="#777"/>
<line x1="646.1" y1="15" x2="646.1" y2="16" stroke="#777"/>
<line x1="653.6" y1="15" x2="653.6" y2="16" stroke="#777"/>
<line x1="661.2" y1="15" x2="661.2" y2="16" stroke="#777"/>
<line x1="668.7" y1="14" x2="668.7" y2="16" stroke="#555"/>
<line x1="676.3" y1="15" x2="676.3" y2="16" stroke="#777"/>
<line x1="683.8" y1="15" x2="683.8" y2="16" stroke="#777"/>
<line x1="691.4" y1="15" x2="691.4" y2="16" stroke="#777"/>
<line x1="699.0" y1="15" x2="699.0" y2="16" stroke="#777"/>
<line x1="706.5" y1="11" x2="706.5" y2="16" stroke="#555"/>
<text x="706.5" y="10" text-anchor="middle">400</text>
<line x1="714.1" y1="15" x2="714.1" y2="16" stroke="#777"/>
<line x1="721.6" y1="15" x2="721.6" y2="16" stroke="#777"/></svg>
<div class="a" style="left:0;top:199px;width:721px;height:1px;background:#7d7c80"></div>

<!-- ===== CANVAS ===== -->
<div class="a" style="left:0;top:200px;width:721px;height:559px;background:#fff"></div>
<svg style="left:0;top:0" width="721" height="759">
 <ellipse cx="240.65" cy="471.27" rx="166.1" ry="211.62" fill="none" stroke="#111" stroke-width="1" transform="rotate(1.26 240.65 471.27)"/>
 <ellipse cx="298.37" cy="481.53" rx="176.98" ry="224.79" fill="none" stroke="#111" stroke-width="1" transform="rotate(13.56 298.37 481.53)"/>
 <line x1="0" y1="620.5" x2="721" y2="620.5" stroke="#1a1a2a" stroke-dasharray="3 3" stroke-dashoffset="1.8"/>
 <path d="M603.5 675.4 L601.5 673.1 L599.6 670.8 L597.7 668.4 L595.9 665.9 L594.2 663.5 L592.6 661.0 L591.0 658.5 L589.4 655.9 L588.0 653.4 L586.6 650.8 L585.2 648.1 L583.9 645.5 L582.6 642.8 L581.4 640.1 L580.3 637.4 L579.2 634.7 L578.1 631.9 L577.1 629.1 L576.2 626.3 L575.2 623.5 L574.3 620.7 L573.5 617.8 L572.7 615.0 L571.9 612.1 L571.1 609.2 L570.4 606.3 L569.7 603.4 L569.1 600.5 L568.4 597.6 L567.8 594.7 L567.2 591.7 L566.7 588.8 L566.1 585.9 L565.6 582.9 L565.1 580.0 L564.6 577.0 L564.2 574.1 L563.8 571.1 L563.4 568.1 L563.0 565.2 L562.6 562.2 L562.3 559.3 L562.0 556.3 L561.7 553.3 L561.4 550.3 L561.2 547.4 L561.0 544.4 L560.8 541.4 L560.6 538.4 L560.5 535.5 L560.4 532.5 L560.3 529.5 L560.2 526.5 L560.1 523.5 L560.1 520.6 L560.1 517.6 L560.1 514.6 L560.2 511.7 L560.3 508.7 L560.4 505.7 L560.5 502.7 L560.6 499.8 L560.8 496.8 L561.0 493.9 L561.2 490.9 L561.5 488.0 L561.7 485.0 L562.0 482.1 L562.3 479.1 L562.7 476.2 L563.0 473.2 L563.4 470.3 L563.8 467.3 L564.2 464.4 L564.6 461.5 L565.1 458.5 L565.5 455.6 L566.0 452.7 L566.5 449.8 L567.0 446.8 L567.6 443.9 L568.1 441.0 L568.7 438.1 L569.3 435.2 L569.9 432.3 L570.5 429.3 L571.1 426.4 L571.8 423.5 L572.4 420.6 L573.1 417.7 L573.8 414.8 L574.5 411.9 L575.2 409.0 L575.9 406.2 L576.7 403.3 L577.4 400.4 L578.2 397.5 L579.0 394.6 L579.7 391.7 L580.5 388.9 L581.3 386.0 L582.1 383.1 L583.0 380.2 L583.8 377.4 L584.6 374.5 L585.5 371.6 L586.3 368.8 L587.2 365.9 L588.0 363.1 L588.9 360.2 L589.8 357.3 L590.7 354.5 L591.5 351.6 L592.4 348.8 L593.3 346.0 L594.2 343.1 L595.1 340.3 L596.0 337.4 L597.0 334.6 L597.9 331.8 L598.8 328.9 L599.7 326.1 L600.6 323.3 L601.6 320.5 L602.5 317.6 L603.5 314.8 L604.4 312.0 L605.4 309.2 L606.4 306.5 L607.4 303.7 L608.5 300.9 L609.5 298.2 L610.6 295.4 L611.7 292.7 L612.9 289.9 L614.1 287.2 L615.3 284.5 L616.5 281.9 L617.8 279.2 L619.1 276.6 L620.5 273.9 L621.9 271.3 L623.3 268.7 L624.8 266.2 L626.4 263.6 L628.0 261.1 L629.6 258.6 L631.3 256.1 L633.1 253.6 L634.9 251.2 L636.8 248.8 L638.7 246.4 L640.7 244.0 L642.8 241.7 L644.9 239.5 L647.1 237.4 L649.4 235.4 L651.8 233.7 L654.2 232.2 L656.8 231.0 L659.4 230.1 L662.2 229.6 L665.0 229.5 L667.9 229.7 L670.7 230.4 L673.4 231.3 L676.0 232.6 L678.6 234.2 L681.0 236.0 L683.3 238.0 L685.5 240.2 L687.6 242.5 L689.6 245.0 L691.6 247.4 L693.4 249.9 L695.1 252.4 L696.8 254.9 L698.4 257.3 L699.9 259.8 L701.4 262.3 L702.9 264.8 L704.3 267.3 L705.8 269.8 L707.3 272.4 L708.7 275.0 L710.2 277.6 L711.6 280.2 L713.1 282.8 L714.5 285.4 L715.9 288.1 L717.3 290.7 L718.7 293.4 L720.1 296.0 L721.4 298.7 L722.8 301.3 L724.1 304.0 L725.4 306.7 L726.7 309.3 L728.0 312.0" fill="none" stroke="#111"/>
 <path d="M603.4 675.4 C612 676.5 625 677 640 677.3 L721 677.5" fill="none" stroke="#111"/>
 <g fill="#000">
  <rect x="64" y="249" width="8" height="8"/><rect x="271" y="249" width="8" height="8"/><rect x="479" y="249" width="8" height="8"/>
  <rect x="64" y="478" width="8" height="8"/><rect x="479" y="478" width="8" height="8"/>
  <rect x="64" y="707" width="8" height="8"/><rect x="271" y="707" width="8" height="8"/><rect x="479" y="707" width="8" height="8"/>
 </g>
 <path d="M273 480 L277 484 M277 480 L273 484" stroke="#000" stroke-width="2.2" stroke-linecap="square"/><rect x="274" y="481" width="2" height="2" fill="#000"/>
 <rect x="403.5" y="473.5" width="5" height="5" fill="none" stroke="#111"/>
 <rect x="467.5" y="518.5" width="5" height="5" fill="none" stroke="#111"/>
 <path d="M605.5 686.5 C606 681 614 680.5 615.5 686 C617 681.5 624 681 625.5 686.5" fill="none" stroke="#d4d4d4" stroke-width="1.3"/>
</svg>
</body></html>
